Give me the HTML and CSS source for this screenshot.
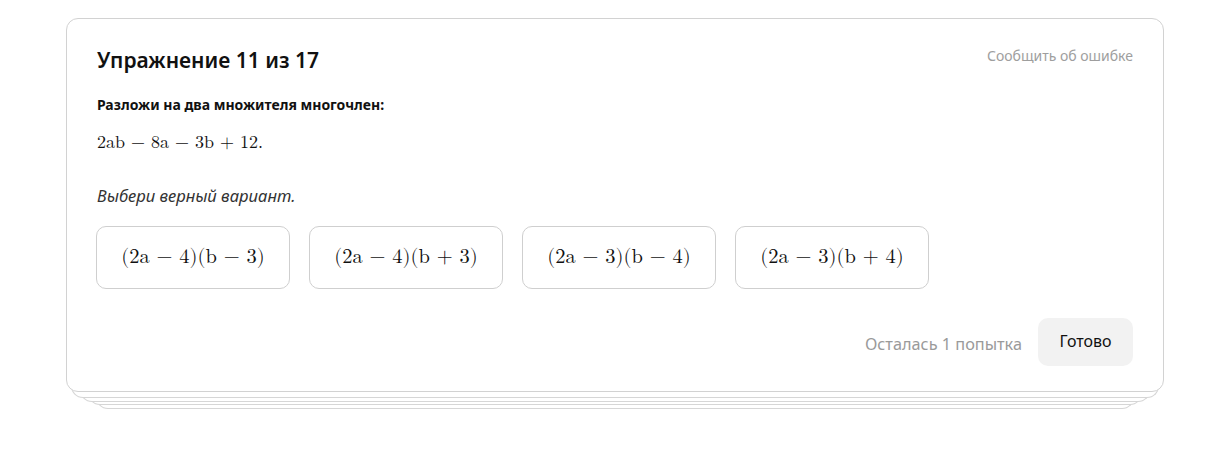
FILE: index.html
```html
<!DOCTYPE html>
<html lang="ru">
<head>
<meta charset="utf-8">
<link rel="stylesheet" href="styles.css">
</head>
<body>
<div class="stack">
  <div class="card">
    <div class="head">
      <h1 class="title">Упражнение 11 из 17</h1>
      <a class="report">Сообщить об ошибке</a>
    </div>
    <p class="task">Разложи на два множителя многочлен:</p>
    <p class="math expr">2ab − 8a − 3b + 12.</p>
    <p class="hint">Выбери верный вариант.</p>
    <div class="options">
      <div class="option math">(2a − 4)(b − 3)</div>
      <div class="option math">(2a − 4)(b + 3)</div>
      <div class="option math">(2a − 3)(b − 4)</div>
      <div class="option math">(2a − 3)(b + 4)</div>
    </div>
    <div class="footer">
      <span class="tries">Осталась 1 попытка</span>
      <button class="done">Готово</button>
    </div>
  </div>
  <div class="under u1"></div>
  <div class="under u2"></div>
  <div class="under u3"></div>
  <div class="under u4"></div>
</div>
</body>
</html>
```
FILE: styles.css
```css
* { box-sizing: border-box; }
body {
  margin: 0;
  background: #fff;
  font-family: "Noto Sans", "Open Sans", sans-serif;
  color: #111;
}
.stack {
  margin: 18px 0 0 66px;
  width: 1098px;
}
.card {
  position: relative;
  z-index: 10;
  background: #fff;
  border: 1px solid #d2d2d2;
  border-radius: 12px;
  padding: 26px 30px 25px 30px;
  height: 374px;
}
.under {
  position: relative;
  background: #fff;
  border: 1px solid #d6d6d6;
  border-top: none;
  border-radius: 0 0 12px 12px;
  height: 20px;
}
.u1 { z-index: 9; margin: -14px 5px 0; }
.u2 { z-index: 8; margin: -16px 14px 0; }
.u3 { z-index: 7; margin: -17px 22px 0; }
.u4 { z-index: 6; margin: -16px 30px 0; }
.head {
  display: flex;
  justify-content: space-between;
  align-items: flex-start;
}
.title {
  margin: 0;
  font-size: 21px;
  font-weight: 600;
  line-height: 30px;
  color: #111;
}
.report {
  font-size: 14px;
  color: #9e9e9e;
  line-height: 20px;
  margin-top: 1px;
}
.task {
  margin: 20px 0 0;
  font-size: 14px;
  font-weight: 700;
  line-height: 20px;
}
.math {
  font-family: "Latin Modern Math", "Liberation Serif", "DejaVu Serif", serif;
}
.expr {
  margin: 15px 0 0;
  font-size: 18px;
  line-height: 24px;
}
.hint {
  margin: 30px 0 0;
  font-size: 16.6px;
  font-style: italic;
  color: #333;
  line-height: 24px;
}
.options {
  display: flex;
  gap: 19px;
  margin: 18px 0 0 -1px;
}
.option {
  width: 194px;
  height: 63px;
  border: 1px solid #cfcfcf;
  border-radius: 10px;
  display: flex;
  align-items: center;
  justify-content: center;
  font-size: 20.5px;
  color: #111;
  padding-bottom: 2px;
}
.footer {
  display: flex;
  justify-content: flex-end;
  align-items: center;
  gap: 16px;
  margin-top: 29px;
}
.tries {
  font-size: 16.3px;
  color: #9a9a9a;
  margin-top: 3px;
}
.done {
  font-family: "Noto Sans", "Open Sans", sans-serif;
  font-size: 16px;
  color: #111;
  background: #f2f2f2;
  border: none;
  border-radius: 10px;
  width: 95px;
  height: 48px;
  padding: 0 0 3px;
}
```
